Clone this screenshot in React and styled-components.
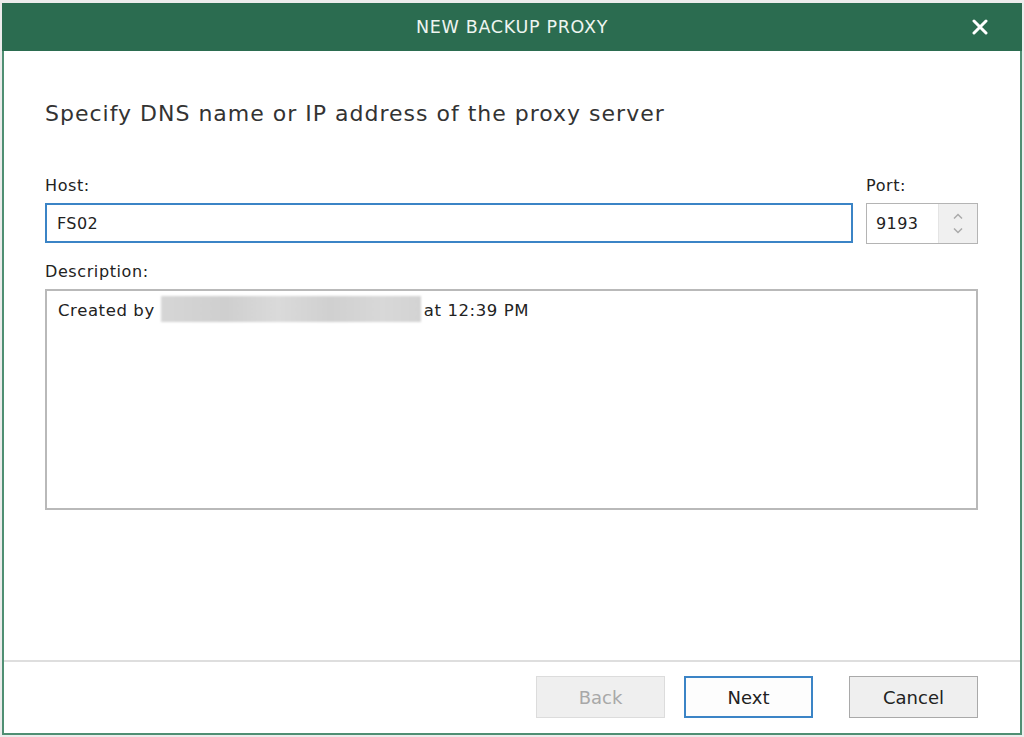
import React from 'react'
import styled, { createGlobalStyle } from 'styled-components'

const GlobalStyle = createGlobalStyle`
  html, body {
    margin: 0;
    padding: 0;
    background: #ececec;
  }
  body {
    font-family: "DejaVu Sans", "Open Sans", sans-serif;
  }
`

const Page = styled.div`
  width: 1024px;
  height: 737px;
  padding: 3px 2px 0 2px;
  box-sizing: border-box;
  background: #ececec;
`

const Window = styled.div`
  display: flex;
  flex-direction: column;
  height: 732px;
  background: #fff;
  border: 2px solid #4f8f73;
  border-top: none;
  box-sizing: border-box;
`

const TitleBar = styled.div`
  position: relative;
  height: 48px;
  margin: 0 -2px;
  background: #2b6c50;
  display: flex;
  align-items: center;
  justify-content: center;
  color: #eef5f0;
  font-size: 17.5px;
  letter-spacing: 0.7px;
`

const CloseButton = styled.button`
  position: absolute;
  right: 30px;
  top: 12px;
  width: 24px;
  height: 24px;
  padding: 0;
  border: none;
  background: transparent;
  display: flex;
  align-items: center;
  justify-content: center;
  cursor: pointer;
`

const Content = styled.div`
  flex: 1;
  padding: 47px 42px 0 41px;
  display: flex;
  flex-direction: column;
`

const Heading = styled.h1`
  margin: 0 0 45px;
  font-weight: 400;
  font-size: 22px;
  line-height: 32px;
  color: #333;
  letter-spacing: 1px;
`

const FieldRow = styled.div`
  display: flex;
  gap: 13px;
`

const Field = styled.div`
  display: flex;
  flex-direction: column;
  flex: ${p => (p.$grow ? 1 : 'none')};
  width: ${p => p.$width || 'auto'};
`

const Label = styled.label`
  font-size: 16px;
  line-height: 22px;
  letter-spacing: 0.6px;
  color: #222;
  margin-bottom: 6px;
  margin-top: ${p => p.$top || 0}px;
`

const TextInput = styled.div`
  height: 40px;
  box-sizing: border-box;
  border: 2px solid #3b84c6;
  padding: 0 10px;
  display: flex;
  align-items: center;
  font-size: 16px;
  letter-spacing: 0.4px;
  color: #222;
`

const Spin = styled.div`
  height: 41px;
  box-sizing: border-box;
  border: 1px solid #b4b4b4;
  display: flex;
  font-size: 16px;
  letter-spacing: 0.4px;
  color: #222;
`

const SpinValue = styled.div`
  flex: 1;
  display: flex;
  align-items: center;
  padding-left: 9px;
`

const SpinButtons = styled.div`
  width: 38px;
  background: #f0f0f0;
  border-left: 1px solid #e4e4e4;
  display: flex;
  flex-direction: column;
  align-items: center;
  justify-content: center;
  gap: 9px;
`

const TextArea = styled.div`
  height: 221px;
  box-sizing: border-box;
  border: 2px solid #b9b9b9;
  padding: 7px 11px;
  font-size: 16.5px;
  line-height: 26px;
  letter-spacing: 0.6px;
  color: #222;
  display: flex;
  align-items: flex-start;
`

const Redacted = styled.span`
  display: inline-block;
  width: 260px;
  height: 26px;
  margin: -2px 3px 0 6px;
  background: linear-gradient(90deg, #d6d6d6 0%, #cfcfcf 25%, #dadada 45%, #d0d0d0 65%, #d8d8d8 85%, #d3d3d3 100%);
  filter: blur(1px);
`

const Footer = styled.div`
  height: 73px;
  border-top: 2px solid #dedede;
  display: flex;
  justify-content: flex-end;
  align-items: flex-start;
  padding: 14px 42px 0 0;
  box-sizing: border-box;
`

const Button = styled.button`
  width: 129px;
  height: 42px;
  margin-left: ${p => p.$gap || 0}px;
  box-sizing: border-box;
  font-family: inherit;
  font-size: 18px;
  background: ${p => (p.$primary ? '#fdfdfd' : '#efefef')};
  color: ${p => (p.disabled ? '#a8a8a8' : '#222')};
  border: ${p =>
    p.$primary ? '2px solid #3b84c6' : p.disabled ? '1px solid #dcdcdc' : '1px solid #a9a9a9'};
  padding: 0;
`

const Chevron = ({ up }) => (
  <svg width="10" height="6" viewBox="0 0 10 6">
    <path
      d={up ? 'M1 5.5 L5 1.5 L9 5.5' : 'M1 0.5 L5 4.5 L9 0.5'}
      fill="none"
      stroke="#aaaaaa"
      strokeWidth="1.5"
    />
  </svg>
)

export default function App() {
  return (
    <>
      <GlobalStyle />
      <Page>
        <Window>
          <TitleBar>
            NEW BACKUP PROXY
            <CloseButton aria-label="Close">
              <svg width="16" height="16" viewBox="0 0 16 16">
                <path d="M2 2 L14 14 M14 2 L2 14" stroke="#fff" strokeWidth="3" strokeLinecap="round" />
              </svg>
            </CloseButton>
          </TitleBar>

          <Content>
            <Heading>Specify DNS name or IP address of the proxy server</Heading>

            <FieldRow>
              <Field $grow>
                <Label>Host:</Label>
                <TextInput>FS02</TextInput>
              </Field>
              <Field $width="112px">
                <Label>Port:</Label>
                <Spin>
                  <SpinValue>9193</SpinValue>
                  <SpinButtons>
                    <Chevron up />
                    <Chevron />
                  </SpinButtons>
                </Spin>
              </Field>
            </FieldRow>

            <Label $top={17}>Description:</Label>
            <TextArea>
              Created by<Redacted />at 12:39 PM
            </TextArea>
          </Content>

          <Footer>
            <Button disabled>Back</Button>
            <Button $primary $gap={19}>Next</Button>
            <Button $gap={36}>Cancel</Button>
          </Footer>
        </Window>
      </Page>
    </>
  )
}
